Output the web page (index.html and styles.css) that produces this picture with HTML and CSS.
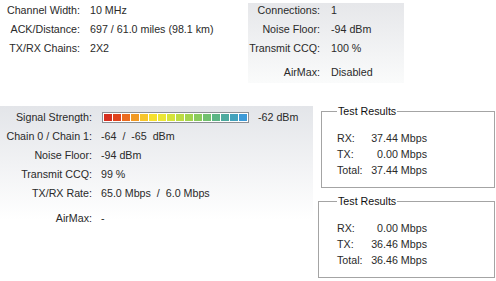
FILE: index.html
```html
<!DOCTYPE html>
<html lang="en">
<head>
    <meta charset="UTF-8">
    <title>Link Status</title>
    <link rel="stylesheet" href="styles.css">
</head>
<body>

    <div class="top">
        <div class="info info-main">
            <span class="lbl">Channel Width:</span><span>10 MHz</span>
            <span class="lbl">ACK/Distance:</span><span>697 / 61.0 miles (98.1 km)</span>
            <span class="lbl">TX/RX Chains:</span><span>2X2</span>
        </div>

        <div class="info info-side">
            <span class="lbl">Connections:</span><span>1</span>
            <span class="lbl">Noise Floor:</span><span>-94 dBm</span>
            <span class="lbl">Transmit CCQ:</span><span>100 %</span>
            <span class="lbl gap">AirMax:</span><span class="gap">Disabled</span>
        </div>
    </div>

    <div class="bottom">
        <div class="info info-remote">
            <span class="lbl">Signal Strength:</span>
            <span class="signal">
                <span class="bar">
                    <i style="background:#d62f1f"></i>
                    <i style="background:#e0431d"></i>
                    <i style="background:#eb6b1f"></i>
                    <i style="background:#f29a24"></i>
                    <i style="background:#f7c52a"></i>
                    <i style="background:#f6e02d"></i>
                    <i style="background:#ebe635"></i>
                    <i style="background:#d6e43b"></i>
                    <i style="background:#bddc43"></i>
                    <i style="background:#a3d44e"></i>
                    <i style="background:#8acb5d"></i>
                    <i style="background:#71c06f"></i>
                    <i style="background:#5cb585"></i>
                    <i style="background:#4daa9f"></i>
                    <i style="background:#43a2bc"></i>
                    <i style="background:#3c9ad8"></i>
                </span>
                <span class="dbm">-62 dBm</span>
            </span>
            <span class="lbl">Chain 0 / Chain 1:</span><span>-64 &nbsp;/ &nbsp;-65 &nbsp;dBm</span>
            <span class="lbl">Noise Floor:</span><span>-94 dBm</span>
            <span class="lbl">Transmit CCQ:</span><span>99 %</span>
            <span class="lbl">TX/RX Rate:</span><span>65.0 Mbps &nbsp;/ &nbsp;6.0 Mbps</span>
            <span class="lbl gap">AirMax:</span><span class="gap">-</span>
        </div>

        <div class="tests">
            <fieldset class="test test-down">
                <legend>Test Results</legend>
                <div class="res">
                    <span>RX:</span><span class="num">37.44 Mbps</span>
                    <span>TX:</span><span class="num">0.00 Mbps</span>
                    <span>Total:</span><span class="num">37.44 Mbps</span>
                </div>
            </fieldset>

            <fieldset class="test test-up">
                <legend>Test Results</legend>
                <div class="res">
                    <span>RX:</span><span class="num">0.00 Mbps</span>
                    <span>TX:</span><span class="num">36.46 Mbps</span>
                    <span>Total:</span><span class="num">36.46 Mbps</span>
                </div>
            </fieldset>
        </div>
    </div>

</body>
</html>
```

FILE: styles.css
```css
body {
    margin: 0;
    font-family: "Liberation Sans", Arial, sans-serif;
    font-size: 10.7px;
    color: #2a2a2a;
    background: #fff;
}

.top {
    display: flex;
    align-items: flex-start;
    padding-top: 1px;
}

.bottom {
    display: flex;
    align-items: flex-start;
    margin-top: 21px;
}

/* label / value grids */
.info {
    display: grid;
    line-height: 19px;
    white-space: nowrap;
}

.info .lbl {
    text-align: right;
}

.info .gap {
    margin-top: 5px;
}

.info-main {
    width: 248px;
    grid-template-columns: 80px auto;
    column-gap: 10px;
    align-content: start;
}

.info-side {
    width: 156px;
    grid-template-columns: 72px auto;
    column-gap: 11px;
    padding-bottom: 1px;
    background: linear-gradient(#fff 0, #fff 2px, #e6e7ea 2px, #fafbfb 100%);
}

.info-remote {
    width: 313px;
    margin-top: 2px;
    padding-top: 2px;
    padding-bottom: 30px;
    grid-template-columns: 92px auto;
    column-gap: 9px;
    background: linear-gradient(#e3e5e9, #fff 75%);
}

.info-remote .gap {
    margin-top: 6px;
}

/* signal meter */
.signal {
    display: flex;
    align-items: center;
}

.bar {
    display: flex;
    gap: 1px;
    padding: 1px;
    margin-left: 1px;
    border: 1px solid #8c8f94;
    background: #fff;
}

.bar i {
    display: block;
    width: 8px;
    height: 7px;
}

.dbm {
    margin-left: 9px;
}

/* test results */
.tests {
    display: flex;
    flex-direction: column;
}

.test {
    margin: 0;
    border: 1px solid #a4a4a4;
    padding: 0 0 9px 15px;
    box-sizing: border-box;
}

.test legend {
    padding: 0 1px;
    margin-left: 0;
    line-height: 14px;
    color: #111;
}

.test-down {
    width: 174px;
    margin-left: 8px;
}

.test-up {
    width: 177px;
    margin-left: 5px;
    margin-top: 6px;
    padding-left: 18px;
}

.res {
    display: grid;
    grid-template-columns: 32px 58px;
    line-height: 16px;
    margin-top: 12px;
    white-space: nowrap;
}

.res .num {
    text-align: right;
}
```
